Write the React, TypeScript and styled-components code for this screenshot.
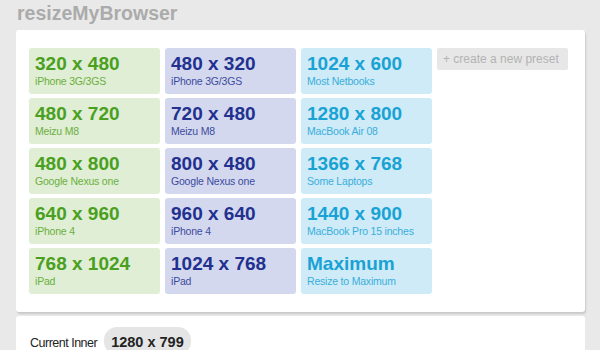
import React from 'react'
import styled, { createGlobalStyle } from 'styled-components'

type Tone = 'green' | 'blue' | 'cyan'

interface Preset {
  size: string
  label: string
}

const columns: { tone: Tone; presets: Preset[] }[] = [
  {
    tone: 'green',
    presets: [
      { size: '320 x 480', label: 'iPhone 3G/3GS' },
      { size: '480 x 720', label: 'Meizu M8' },
      { size: '480 x 800', label: 'Google Nexus one' },
      { size: '640 x 960', label: 'iPhone 4' },
      { size: '768 x 1024', label: 'iPad' },
    ],
  },
  {
    tone: 'blue',
    presets: [
      { size: '480 x 320', label: 'iPhone 3G/3GS' },
      { size: '720 x 480', label: 'Meizu M8' },
      { size: '800 x 480', label: 'Google Nexus one' },
      { size: '960 x 640', label: 'iPhone 4' },
      { size: '1024 x 768', label: 'iPad' },
    ],
  },
  {
    tone: 'cyan',
    presets: [
      { size: '1024 x 600', label: 'Most Netbooks' },
      { size: '1280 x 800', label: 'MacBook Air 08' },
      { size: '1366 x 768', label: 'Some Laptops' },
      { size: '1440 x 900', label: 'MacBook Pro 15 inches' },
      { size: 'Maximum', label: 'Resize to Maximum' },
    ],
  },
]

const tones: Record<Tone, { bg: string; main: string; sub: string }> = {
  green: { bg: '#dfeed4', main: '#4aa01e', sub: '#6cae3e' },
  blue: { bg: '#d3d8ee', main: '#22308f', sub: '#3d4ba0' },
  cyan: { bg: '#ceebf7', main: '#19a2d4', sub: '#3aaedb' },
}

const App: React.FC = () => (
  <>
    <GlobalStyle />
    <Page>
      <Title>resizeMyBrowser</Title>
      <Panel>
        <PresetGrid>
          {columns.map((col) =>
            col.presets.map((p) => (
              <Tile key={p.size + p.label} $tone={col.tone}>
                <Size $tone={col.tone}>{p.size}</Size>
                <Label $tone={col.tone}>{p.label}</Label>
              </Tile>
            ))
          )}
          <NewPreset>+ create a new preset</NewPreset>
        </PresetGrid>
      </Panel>
      <InfoPanel>
        <InfoLabel>Current Inner</InfoLabel>
        <Pill>1280 x 799</Pill>
      </InfoPanel>
    </Page>
  </>
)

const GlobalStyle = createGlobalStyle`
  html, body {
    margin: 0;
    padding: 0;
    background: #e9e9e9;
    font-family: "Liberation Sans", Arial, sans-serif;
    overflow: hidden;
  }
`

const Page = styled.div`
  width: 600px;
  height: 350px;
  overflow: hidden;
  display: flex;
  flex-direction: column;

  & > * {
    flex-shrink: 0;
  }
`

const Title = styled.h1`
  margin: 0;
  padding: 2px 0 0 17px;
  height: 30px;
  box-sizing: border-box;
  font-size: 19.5px;
  line-height: 22px;
  font-weight: bold;
  color: #ababab;
`

const Panel = styled.div`
  margin-left: 16px;
  width: 569px;
  box-sizing: border-box;
  padding: 18px 0 18px 13px;
  background: #fff;
  border-radius: 3px;
  box-shadow: 1px 2px 2px rgba(0, 0, 0, 0.14);
`

const PresetGrid = styled.div`
  display: grid;
  grid-template-rows: repeat(5, 46px);
  grid-auto-columns: 131px;
  grid-auto-flow: column;
  column-gap: 5px;
  row-gap: 4px;
`

const Tile = styled.div<{ $tone: Tone }>`
  background: ${(p) => tones[p.$tone].bg};
  border-radius: 3px;
  padding: 5px 0 0 6px;
  box-sizing: border-box;
  display: flex;
  flex-direction: column;
`

const Size = styled.div<{ $tone: Tone }>`
  font-size: 19px;
  line-height: 21px;
  font-weight: bold;
  color: ${(p) => tones[p.$tone].main};
`

const Label = styled.div<{ $tone: Tone }>`
  margin-top: 1px;
  font-size: 10.5px;
  line-height: 13px;
  letter-spacing: -0.2px;
  color: ${(p) => tones[p.$tone].sub};
`

const NewPreset = styled.div`
  height: 22px;
  align-self: start;
  background: #e7e7e7;
  border-radius: 2px;
  padding-left: 6px;
  font-size: 12px;
  line-height: 22px;
  color: #b3b3b3;
`

const InfoPanel = styled.div`
  margin: 4px 0 0 16px;
  width: 569px;
  box-sizing: border-box;
  padding: 11px 0 0 14px;
  height: 60px;
  background: #fff;
  border-radius: 3px 3px 0 0;
  display: flex;
  align-items: flex-start;
  gap: 7px;
`

const InfoLabel = styled.span`
  font-size: 12.5px;
  letter-spacing: -0.5px;
  line-height: 26px;
  margin-top: 3px;
  color: #222;
`

const Pill = styled.span`
  height: 28px;
  padding: 0 7px;
  border-radius: 13px;
  background: #e5e5e5;
  font-size: 14.5px;
  font-weight: bold;
  line-height: 30px;
  color: #222;
`

export default App
